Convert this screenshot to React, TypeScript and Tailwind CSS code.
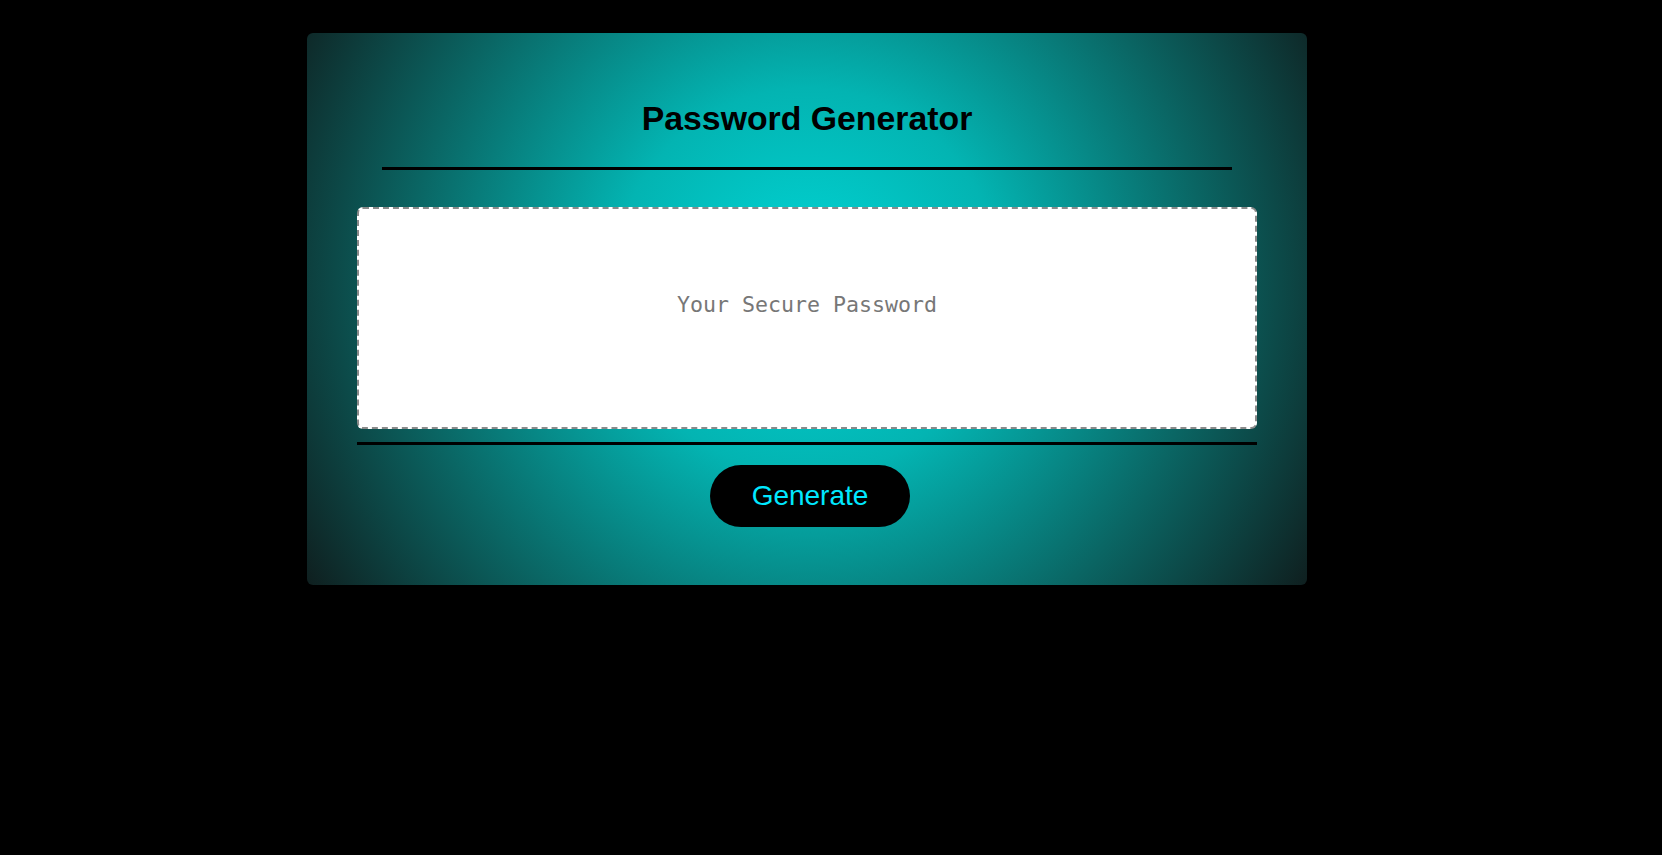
export default function App() {
  return (
    <div className="min-h-screen bg-black pt-[33px] pl-[307px]">
      <div
        className="flex h-[552px] w-[1000px] flex-col items-center rounded-[6px] pt-[69px]"
        style={{ background: "radial-gradient(circle at 50% 45%, #00d6d6 0%, #03b4b2 33%, #0a6664 68%, #0f1f1f 100%)" }}
      >
        <h1 className="text-[33.8px] font-bold leading-[33px] text-black [font-family:'Liberation_Sans',Arial,sans-serif]">
          Password Generator
        </h1>
        <div className="mt-[32px] h-[3px] w-[850px] bg-black" />
        <textarea
          readOnly
          placeholder="Your Secure Password"
          className="mt-[37px] h-[222px] w-[900px] resize-none rounded-[6px] border-2 border-dashed border-[#8a8a8a] bg-white px-4 pt-[80px] text-center text-[21.6px] text-[#777] outline-none placeholder:text-[#777] [font-family:'DejaVu_Sans_Mono',monospace]"
        />
        <div className="mt-[13px] h-[3px] w-[900px] bg-black" />
        <button className="mt-[20px] ml-[6px] h-[62px] w-[200px] rounded-full bg-black text-[28px] text-[#00e8ff] [font-family:'Liberation_Sans',Arial,sans-serif]">
          Generate
        </button>
      </div>
    </div>
  );
}
